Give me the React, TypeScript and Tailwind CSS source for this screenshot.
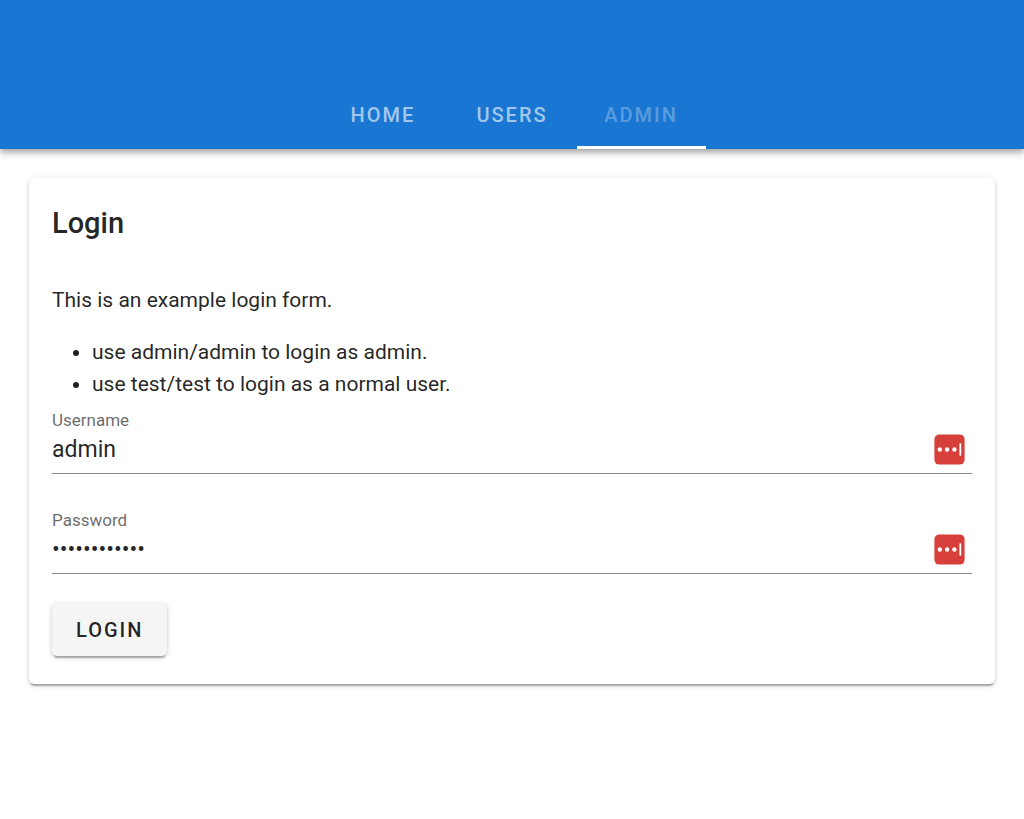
import React, { useState } from "react";

interface Tab {
  name: string;
  href: string;
  active?: boolean;
}

const tabs: Tab[] = [
  { name: "Home", href: "#home" },
  { name: "Users", href: "#users" },
  { name: "Admin", href: "#admin", active: true },
];

interface FieldProps {
  id: string;
  label: string;
  type: string;
  value: string;
  onChange: (value: string) => void;
}

const ManagerIcon = () => (
  <svg width="31" height="31" viewBox="0 0 31 31" aria-hidden="true">
    <rect x="0.4" y="0.4" width="30.2" height="30.2" rx="5" fill="#d7403a" />
    <circle cx="5.8" cy="15.5" r="2.2" fill="#fff" />
    <circle cx="13.1" cy="15.5" r="2.2" fill="#fff" />
    <circle cx="20.4" cy="15.5" r="2.2" fill="#fff" />
    <rect x="25.4" y="9.3" width="1.8" height="12.4" rx="0.6" fill="#fff" />
  </svg>
);

const Field: React.FC<FieldProps> = ({ id, label, type, value, onChange }) => {
  return (
    <div className="border-b border-[#888888]">
      <label htmlFor={id} className="block text-[17px] leading-5 text-black/60">
        {label}
      </label>
      <div className="flex items-center pr-[7px] pb-1">
        <input
          id={id}
          type={type}
          value={value}
          onChange={(e) => onChange(e.target.value)}
          className="h-[39px] min-w-0 flex-1 bg-transparent text-[23px] text-black/87 outline-none"
        />
        <ManagerIcon />
      </div>
    </div>
  );
};

const App: React.FC = () => {
  const [username, setUsername] = useState("admin");
  const [password, setPassword] = useState("administrato");

  return (
    <div className="min-h-screen bg-white font-['Roboto',sans-serif] text-black/87">
      <header className="bg-[#1976d2] pt-20 shadow-[0_3px_5px_-1px_rgba(0,0,0,0.2),0_5px_6px_rgba(0,0,0,0.14),0_1px_13px_rgba(0,0,0,0.12)]">
        <nav className="flex justify-center">
          {tabs.map((tab) => (
            <a
              key={tab.name}
              href={tab.href}
              className={`flex h-[69px] min-w-[129px] items-center justify-center border-b-3 px-[27px] pt-[3px] text-xl font-medium tracking-widest uppercase ${
                tab.active ? "border-white" : "border-transparent"
              }`}
            >
              <span className={tab.active ? "text-white/30" : "text-white/60"}>{tab.name}</span>
            </a>
          ))}
        </nav>
      </header>

      <main className="p-[29px]">
        <form
          onSubmit={(e) => e.preventDefault()}
          className="rounded-[5px] px-[23px] pt-[25px] pb-7 shadow-[0_4px_1px_-2px_rgba(0,0,0,0.2),0_2px_3px_rgba(0,0,0,0.14),0_1px_6px_rgba(0,0,0,0.12)]"
        >
          <h1 className="text-[29px] leading-10 font-medium">Login</h1>
          <div className="pt-[41px] text-[21px] leading-8">
            <p className="mb-5">This is an example login form.</p>
            <ul className="list-disc pl-10">
              <li>use admin/admin to login as admin.</li>
              <li>use test/test to login as a normal user.</li>
            </ul>
          </div>
          <div className="flex flex-col gap-9 pt-[10px]">
            <Field id="username" label="Username" type="text" value={username} onChange={setUsername} />
            <Field id="password" label="Password" type="password" value={password} onChange={setPassword} />
          </div>
          <button
            type="submit"
            className="mt-[29px] h-[53px] rounded-[5px] bg-[#f5f5f5] px-6 text-xl font-medium tracking-widest uppercase shadow-[0_4px_1px_-2px_rgba(0,0,0,0.2),0_2px_3px_rgba(0,0,0,0.14),0_1px_6px_rgba(0,0,0,0.12)]"
          >
            Login
          </button>
        </form>
      </main>
    </div>
  );
};

export default App;
